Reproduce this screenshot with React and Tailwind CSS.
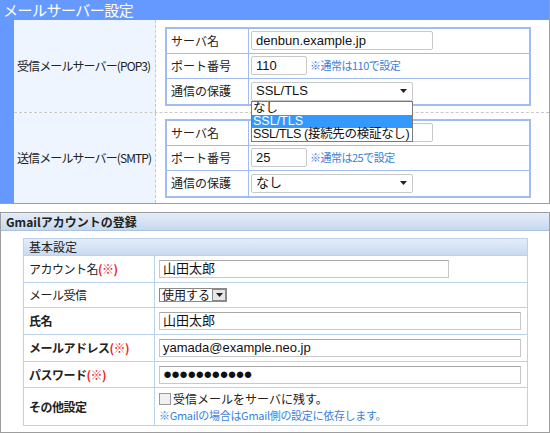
const jp = "font-['Noto_Sans_CJK_JP',sans-serif]";

function Arrow() {
  return (
    <svg width="7" height="4" viewBox="0 0 7 4" className="shrink-0">
      <path d="M0 0h7L3.5 4z" fill="#222" />
    </svg>
  );
}

function Row({ label, children, last }) {
  return (
    <div className={`flex h-[25px] ${last ? '' : 'border-b border-[#9fbcf5]'}`}>
      <div className="w-[82px] border-r border-[#9fbcf5] flex items-center pl-[4px] text-[12px] text-[#222] whitespace-nowrap">{label}</div>
      <div className="flex-1 flex items-center pl-[2px] gap-[3px]">{children}</div>
    </div>
  );
}

function Input({ w, value }) {
  return (
    <div className={`${w} h-[19px] border border-[#c9c9c9] rounded-[2px] bg-white flex items-center px-[4px] text-[13px] text-[#111] font-['Liberation_Sans',sans-serif]`}>
      {value}
    </div>
  );
}

function Select({ value, children }) {
  return (
    <div className="relative">
      <div className="w-[162px] h-[19px] border border-[#c9c9c9] rounded-[2px] bg-white flex items-center justify-between pl-[4px] pr-[5px] text-[13px] text-[#111] font-['Liberation_Sans','Noto_Sans_CJK_JP',sans-serif]">
        <span>{value}</span>
        <Arrow />
      </div>
      {children}
    </div>
  );
}

function Note({ children }) {
  return <span className="text-[11px] text-[#3b7fdb] tracking-[-0.5px] whitespace-nowrap">{children}</span>;
}

function ServerSection({ label, port, note, sec, open, h }) {
  return (
    <div className={`flex ${h}`}>
      <div className="w-[142px] bg-[#eef5ff] border-r border-dashed border-[#c8c8c8] flex items-center pl-[3px] text-[12px] tracking-[-0.9px] whitespace-nowrap text-[#222]">
        {label}
      </div>
      <div className="flex-1 pl-[9px] flex items-center">
        <div className="w-[366px] border-2 border-[#9fbcf5]">
          <Row label="サーバ名"><Input w="w-[182px]" value={open ? 'denbun.example.jp' : ''} /></Row>
          <Row label="ポート番号"><Input w="w-[56px]" value={port} /><Note>{note}</Note></Row>
          <Row label="通信の保護" last>
            <Select value={sec}>
              {open && (
                <div className="absolute left-0 top-[19px] w-[162px] border border-[#7a7a7a] bg-white z-10 text-[12.5px] leading-[13px] whitespace-nowrap text-[#111] font-['Liberation_Sans','Noto_Sans_CJK_JP',sans-serif]">
                  <div className="h-[13px] pl-[1px]">なし</div>
                  <div className="h-[13px] pl-[1px] bg-[#3399ff] text-white">SSL/TLS</div>
                  <div className="h-[13px] pl-[1px] tracking-[-0.3px]">SSL/TLS (接続先の検証なし)</div>
                </div>
              )}
            </Select>
          </Row>
        </div>
      </div>
    </div>
  );
}

function GRow({ label, req, bold, h, children, last }) {
  return (
    <div className={`flex ${h} ${last ? '' : 'border-b border-[#bcd2ec]'}`}>
      <div className={`w-[131px] border-r border-[#bcd2ec] flex items-center pl-[5px] text-[12px] tracking-[-0.5px] whitespace-nowrap text-[#222] ${bold ? 'font-bold' : ''}`}>
        {label}{req && <span className="text-[#ee2222] font-bold">(※)</span>}
      </div>
      <div className="flex-1 flex items-center pl-[4px]">{children}</div>
    </div>
  );
}

function GInput({ w, value, dots }) {
  return (
    <div className={`${w} h-[18px] border border-[#c8c8c8] border-t-[#a8a8a8] bg-white flex items-center px-[3px] text-[13px] text-[#111] font-['Liberation_Sans','Noto_Sans_CJK_JP',sans-serif]`}>
      {dots ? <span className="text-[15px] tracking-[-1px]">●●●●●●●●●●●</span> : value}
    </div>
  );
}

export default function App() {
  return (
    <div className={`w-[550px] h-[433px] bg-white overflow-hidden ${jp}`}>
      <div className="w-[550px] border-r border-b border-[#9d9d9d]">
        <div className="h-[20px] bg-[#6699ff] text-white text-[15px] leading-[20px] pl-[3px] tracking-[-0.5px]">メールサーバー設定</div>
        <div className="bg-[#6699ff] pl-[14px]">
          <div className="bg-white">
            <ServerSection label="受信メールサーバー(POP3)" port="110" note="※通常は110で設定" sec="SSL/TLS" open h="h-[92px]" />
            <div className="border-t border-dashed border-[#c8c8c8]" />
            <ServerSection label="送信メールサーバー(SMTP)" port="25" note="※通常は25で設定" sec="なし" h="h-[90px]" />
          </div>
        </div>
      </div>

      <div className="mt-[8px] w-[550px] h-[221px] border border-[#9d9d9d]">
        <div className="h-[18px] bg-gradient-to-b from-[#e4edf8] to-[#c7d9ef] border-b border-[#a9c2e2] flex items-center pl-[5px] text-[12px] font-bold text-[#222]">
          Gmailアカウントの登録
        </div>
        <div className="pt-[7px] pl-[22px]">
          <div className="w-[505px] border border-[#bcd2ec]">
            <div className="h-[17px] bg-gradient-to-b from-[#e4edf8] to-[#c9dbf0] border-b border-[#bcd2ec] flex items-center pl-[5px] text-[12px] text-[#222]">基本設定</div>
            <GRow label="アカウント名" req h="h-[27px]"><GInput w="w-[290px]" value="山田太郎" /></GRow>
            <GRow label="メール受信" h="h-[25px]">
              <div className="flex items-center h-[14px] border border-[#8a8a8a] bg-white text-[12px] text-[#111] whitespace-nowrap">
                <span className="w-[52px] pl-[2px] leading-[12px]">使用する</span>
                <span className="w-[14px] h-[12px] border border-[#888] bg-[#e6e6e6] flex items-center justify-center"><Arrow /></span>
              </div>
            </GRow>
            <GRow label="氏名" bold h="h-[27px]"><GInput w="w-[362px]" value="山田太郎" /></GRow>
            <GRow label="メールアドレス" req bold h="h-[27px]"><GInput w="w-[362px]" value="yamada@example.neo.jp" /></GRow>
            <GRow label="パスワード" req bold h="h-[26px]"><GInput w="w-[362px]" dots /></GRow>
            <GRow label="その他設定" bold h="h-[37px]" last>
              <div className="flex flex-col text-[12px] leading-[16px]">
                <div className="flex items-center gap-[2px] text-[#222]">
                  <span className="w-[12px] h-[12px] border border-[#9a9a9a] bg-[#f0f0f0]" />
                  受信メールをサーバに残す。
                </div>
                <span className="text-[11px] text-[#3b7fdb] tracking-[-0.3px]">※Gmailの場合はGmail側の設定に依存します。</span>
              </div>
            </GRow>
          </div>
        </div>
      </div>
    </div>
  );
}
